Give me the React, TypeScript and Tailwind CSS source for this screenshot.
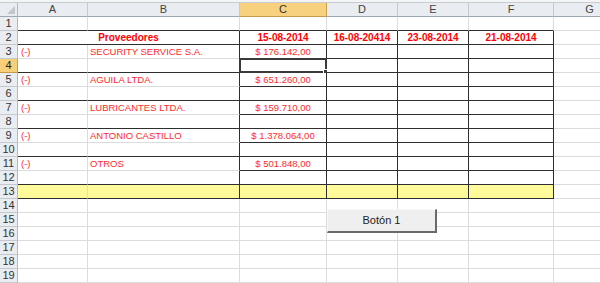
import React from "react";

const cols = [
  { k: "A", w: 70 },
  { k: "B", w: 152 },
  { k: "C", w: 87 },
  { k: "D", w: 71 },
  { k: "E", w: 71 },
  { k: "F", w: 85 },
  { k: "G", w: 72 },
];

const data: Record<number, { name: string; amount: string }> = {
  3: { name: "SECURITY SERVICE S.A.", amount: "$ 176.142,00" },
  5: { name: "AGUILA LTDA.", amount: "$ 651.260,00" },
  7: { name: "LUBRICANTES LTDA.", amount: "$ 159.710,00" },
  9: { name: "ANTONIO CASTILLO", amount: "$ 1.378.064,00" },
  11: { name: "OTROS", amount: "$ 501.848,00" },
};

const dates: Record<string, string> = {
  C: "15-08-2014",
  D: "16-08-20414",
  E: "23-08-2014",
  F: "21-08-2014",
};

const font = { fontFamily: '"Liberation Sans", Arial, sans-serif' };

function bottomDark(r: number, c: number) {
  if (c > 5) return false;
  if (r < 1 || r > 13) return false;
  if (r === 1 || r === 2 || r === 13) return true;
  if (c >= 2) return true;
  return r % 2 === 0;
}

function rightDark(r: number, c: number) {
  if (r < 2 || r > 13) return false;
  return c >= 1 && c <= 5;
}

function Cell({ r, c }: { r: number; c: number }) {
  const col = cols[c];
  const bd = bottomDark(r, c);
  const rd = rightDark(r, c);
  const yellow = r === 13 && c <= 5;
  const selected = r === 4 && c === 2;
  let content: React.ReactNode = null;
  if (r === 2 && c >= 2 && c <= 5) {
    content = (
      <span className="w-full text-center text-[10px] font-bold text-[#ff0000]">{dates[col.k]}</span>
    );
  }
  const d = data[r];
  if (d) {
    if (c === 0) content = <span className="pl-[3px] text-[9.5px] text-[#ff2a2a]">(-)</span>;
    if (c === 1) content = <span className="pl-[2px] text-[9.5px] text-[#ff2a2a]">{d.name}</span>;
    if (c === 2)
      content = <span className="w-full text-center text-[9.5px] text-[#ff2a2a]">{d.amount}</span>;
  }
  return (
    <div
      className={
        "relative flex h-full shrink-0 items-center overflow-visible whitespace-nowrap border-b border-r leading-none " +
        (bd ? "border-b-[#2e2e2e] " : "border-b-[#dadcdd] ") +
        (rd ? "border-r-[#2e2e2e] " : "border-r-[#dadcdd] ") +
        (yellow ? "bg-[#fffb9a]" : "bg-white")
      }
      style={{ width: col.w }}
    >
      {content}
      {selected && (
        <div className="pointer-events-none absolute -left-[1px] -top-[1px] h-[15px] w-[88px] border-2 border-[#3a3a3a]">
          <div className="absolute -bottom-[3px] -right-[3px] h-[5px] w-[5px] border border-white bg-[#3a3a3a]" />
        </div>
      )}
    </div>
  );
}

function Row({ r }: { r: number }) {
  const sel = r === 4;
  return (
    <div className="flex h-[14px]">
      <div
        className={
          "flex h-full w-[18px] shrink-0 items-center justify-center border-b border-r text-[11px] leading-none " +
          (sel
            ? "border-b-[#c29a4a] border-r-[#c29a4a] bg-[#f7cf7a] text-[#222]"
            : "border-b-[#c5c9ce] border-r-[#b5b9be] bg-[#e9ecf0] text-[#333]")
        }
      >
        {r}
      </div>
      {r === 2 ? (
        <>
          <div className="flex h-full w-[222px] shrink-0 items-center justify-center border-b border-r border-b-[#2e2e2e] border-r-[#2e2e2e] bg-white leading-none">
            <span className="text-[10px] font-bold text-[#ff0000]">Proveedores</span>
          </div>
          {cols.slice(2).map((_, i) => (
            <Cell key={i} r={r} c={i + 2} />
          ))}
        </>
      ) : (
        cols.map((_, i) => <Cell key={i} r={r} c={i} />)
      )}
    </div>
  );
}

export default function App() {
  const rows = Array.from({ length: 19 }, (_, i) => i + 1);
  return (
    <div className="relative h-[283px] w-[600px] overflow-hidden bg-white" style={font}>
      <div className="h-[3px] w-full border-b border-b-[#c8ccd0] bg-[#f3f4f6]" />
      <div className="flex h-[14px]">
        <div className="relative h-full w-[18px] shrink-0 border-b border-r border-b-[#9ea6b0] border-r-[#b5b9be] bg-[#e9ecf0]">
          <div className="absolute bottom-[2px] right-[2px] h-0 w-0 border-b-[8px] border-l-[8px] border-b-[#c3c7cc] border-l-transparent" />
        </div>
        {cols.map((c) => (
          <div
            key={c.k}
            className={
              "flex h-full shrink-0 items-center justify-center border-b border-r text-[11px] leading-none " +
              (c.k === "C"
                ? "border-b-[#c29a4a] border-r-[#c9a257] bg-[#f8d17f] text-[#333]"
                : "border-b-[#9ea6b0] border-r-[#c5c9ce] bg-[#e9ecf0] text-[#444]")
            }
            style={{ width: c.w }}
          >
            {c.k}
          </div>
        ))}
      </div>
      {rows.map((r) => (
        <Row key={r} r={r} />
      ))}
      <div className="absolute left-[327px] top-[209px] flex h-[24px] w-[110px] items-center justify-center border-b-2 border-r-2 border-l border-t border-b-[#6a6a6a] border-r-[#6a6a6a] border-l-[#f8f8f8] border-t-[#f8f8f8] bg-[#efefef] text-[11px] text-[#222]">
        Botón 1
      </div>
    </div>
  );
}
